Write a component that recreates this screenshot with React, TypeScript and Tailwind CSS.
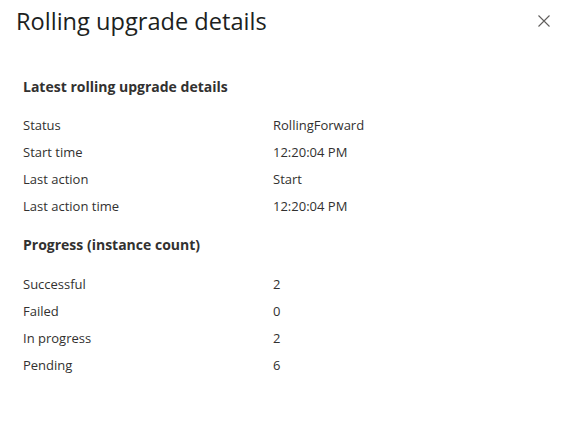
const latest = [
  ["Status", "RollingForward"],
  ["Start time", "12:20:04 PM"],
  ["Last action", "Start"],
  ["Last action time", "12:20:04 PM"],
];

const progress = [
  ["Successful", "2"],
  ["Failed", "0"],
  ["In progress", "2"],
  ["Pending", "6"],
];

function Rows({ rows }: { rows: string[][] }) {
  return (
    <div className="flex flex-col">
      {rows.map(([label, value]) => (
        <div key={label} className="flex h-[27px] items-center text-[13px]">
          <div className="w-[250px]">{label}</div>
          <div>{value}</div>
        </div>
      ))}
    </div>
  );
}

export default function App() {
  return (
    <div
      className="w-[565px] h-[425px] bg-white text-[#323130]"
      style={{ fontFamily: "'Open Sans', 'Noto Sans', sans-serif" }}
    >
      <div className="flex items-start justify-between pl-[16px] pr-[10px] pt-[4px]">
        <h1 className="text-[23.6px] leading-[34px] text-[#201f1e]">Rolling upgrade details</h1>
        <button className="mt-[6px] p-[4px] text-[#605e5c]" aria-label="Close">
          <svg width="14" height="14" viewBox="0 0 14 14" fill="none" stroke="currentColor" strokeWidth="1.1">
            <path d="M1.5 1.5L12.5 12.5M12.5 1.5L1.5 12.5" />
          </svg>
        </button>
      </div>

      <div className="px-[23px] pt-[39px]">
        <h2 className="text-[14px] font-bold leading-[20px] mb-[15px]">Latest rolling upgrade details</h2>
        <Rows rows={latest} />
        <h2 className="text-[14px] font-bold leading-[20px] mt-[15px] mb-[16px]">Progress (instance count)</h2>
        <Rows rows={progress} />
      </div>
    </div>
  );
}
